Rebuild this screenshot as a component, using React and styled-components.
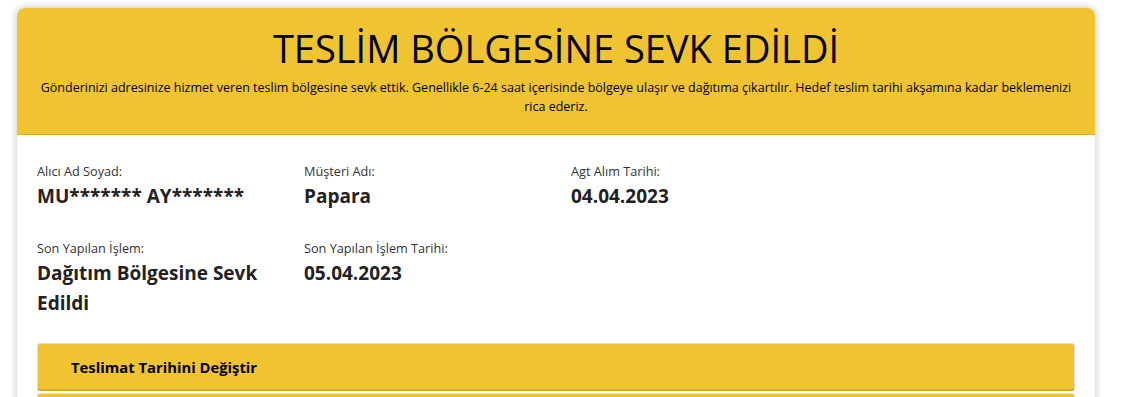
import styled, { createGlobalStyle } from 'styled-components';

const GlobalStyle = createGlobalStyle`
  html, body {
    margin: 0;
    padding: 0;
    background: #ffffff;
    font-family: "Open Sans", "Noto Sans", sans-serif;
    color: #212529;
  }
`;

const Page = styled.div`
  padding: 8px 40px 0 17px;
`;

const Card = styled.div`
  width: 1078px;
  background: #ffffff;
  border-radius: 8px;
  box-shadow: 0 0 8px rgba(0, 0, 0, 0.25);
  overflow: hidden;
`;

const Header = styled.div`
  background: #f0c330;
  border-bottom: 1px solid #d9ad24;
  padding: 14px 22px 18px;
  text-align: center;
  color: #000;
`;

const Title = styled.h1`
  margin: 0 0 4px;
  font-size: 38px;
  font-weight: 400;
  line-height: 52px;
`;

const Subtitle = styled.p`
  margin: 0;
  font-size: 12.5px;
  line-height: 19px;
`;

const Body = styled.div`
  padding: 27px 20px 0;
`;

const Grid = styled.div`
  display: grid;
  grid-template-columns: repeat(4, 267px);
  row-gap: 28px;
`;

const Field = styled.div`
  padding-right: 8px;
`;

const Label = styled.div`
  font-size: 12.7px;
  line-height: 18px;
  color: #333;
`;

const Value = styled.div`
  font-size: 19px;
  font-weight: 700;
  line-height: 30px;
  color: #222;
  margin-top: 1px;
`;

const Accordion = styled.div`
  margin-top: 25px;
  display: flex;
  flex-direction: column;
  gap: 2px;
`;

const AccordionItem = styled.div`
  background: #f0c330;
  border: 1px solid #dedede;
  border-bottom: 2px solid #d6a928;
  border-radius: 3px;
  height: 45px;
  display: flex;
  align-items: center;
  padding-left: 33px;
  font-size: 14.8px;
  font-weight: 700;
  color: #000;
`;

const fields = [
  { label: 'Alıcı Ad Soyad:', value: 'MU******* AY*******' },
  { label: 'Müşteri Adı:', value: 'Papara' },
  { label: 'Agt Alım Tarihi:', value: '04.04.2023' },
  null,
  { label: 'Son Yapılan İşlem:', value: 'Dağıtım Bölgesine Sevk Edildi' },
  { label: 'Son Yapılan İşlem Tarihi:', value: '05.04.2023' },
];

export default function App() {
  return (
    <>
      <GlobalStyle />
      <Page>
        <Card>
          <Header>
            <Title>TESLİM BÖLGESİNE SEVK EDİLDİ</Title>
            <Subtitle>
              Gönderinizi adresinize hizmet veren teslim bölgesine sevk ettik. Genellikle 6-24 saat içerisinde bölgeye ulaşır ve dağıtıma çıkartılır. Hedef teslim tarihi akşamına kadar beklemenizi rica ederiz.
            </Subtitle>
          </Header>
          <Body>
            <Grid>
              {fields.map((f, i) =>
                f ? (
                  <Field key={i}>
                    <Label>{f.label}</Label>
                    <Value>{f.value}</Value>
                  </Field>
                ) : (
                  <Field key={i} />
                )
              )}
            </Grid>
            <Accordion>
              <AccordionItem>Teslimat Tarihini Değiştir</AccordionItem>
              <AccordionItem>Teslimat Adresini Değiştir</AccordionItem>
            </Accordion>
          </Body>
        </Card>
      </Page>
    </>
  );
}
